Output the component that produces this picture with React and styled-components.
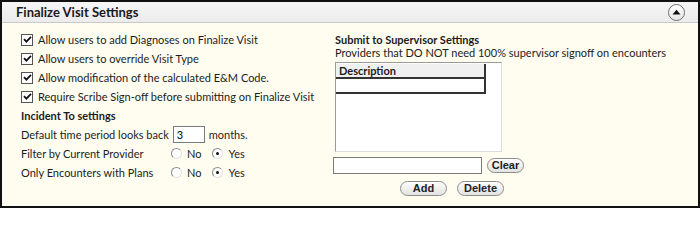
import styled, { createGlobalStyle } from "styled-components";
import { useState } from "react";

const GlobalStyle = createGlobalStyle`
  html, body {
    margin: 0;
    padding: 0;
    background: #ffffff;
  }
  * {
    box-sizing: border-box;
  }
`;

const options = [
  "Allow users to add Diagnoses on Finalize Visit",
  "Allow users to override Visit Type",
  "Allow modification of the calculated E&M Code.",
  "Require Scribe Sign-off before submitting on Finalize Visit",
];

function CheckBox({ checked }) {
  return (
    <Box>
      {checked && (
        <svg width="9" height="9" viewBox="0 0 9 9">
          <path d="M1 4.2 L3.4 6.6 L8 1.8" stroke="#111" strokeWidth="1.8" fill="none" />
        </svg>
      )}
    </Box>
  );
}

function RadioGroup({ value }) {
  return (
    <Radios>
      <RadioItem>
        <Radio $on={value === "no"} />
        <span>No</span>
      </RadioItem>
      <RadioItem>
        <Radio $on={value === "yes"} />
        <span>Yes</span>
      </RadioItem>
    </Radios>
  );
}

export default function App() {
  const [months, setMonths] = useState("3");
  const [search, setSearch] = useState("");

  return (
    <>
      <GlobalStyle />
      <Panel>
        <Header>
          <Title>Finalize Visit Settings</Title>
          <Collapse>
            <svg width="9" height="6" viewBox="0 0 9 6">
              <path d="M0.5 5.5 L4.5 0.8 L8.5 5.5 Z" fill="#111" />
            </svg>
          </Collapse>
        </Header>
        <Body>
          <Column>
            {options.map((o) => (
              <Row key={o}>
                <CheckBox checked />
                <Label>{o}</Label>
              </Row>
            ))}
            <SubHead>Incident To settings</SubHead>
            <Row>
              <Label>Default time period looks back</Label>
              <Months value={months} onChange={(e) => setMonths(e.target.value)} />
              <Label>months.</Label>
            </Row>
            <Row>
              <FieldName>Filter by Current Provider</FieldName>
              <RadioGroup value="yes" />
            </Row>
            <Row>
              <FieldName>Only Encounters with Plans</FieldName>
              <RadioGroup value="yes" />
            </Row>
          </Column>
          <Column>
            <SideTitle>Submit to Supervisor Settings</SideTitle>
            <SideText>Providers that DO NOT need 100% supervisor signoff on encounters</SideText>
            <ListBox>
              <Table>
                <thead>
                  <tr>
                    <Th>Description</Th>
                  </tr>
                </thead>
                <tbody>
                  <tr>
                    <Td />
                  </tr>
                </tbody>
              </Table>
            </ListBox>
            <SearchRow>
              <Search value={search} onChange={(e) => setSearch(e.target.value)} />
              <Pill $w={37}>Clear</Pill>
            </SearchRow>
            <ButtonRow>
              <Pill $w={47}>Add</Pill>
              <Pill $w={47}>Delete</Pill>
            </ButtonRow>
          </Column>
        </Body>
      </Panel>
    </>
  );
}

const Panel = styled.div`
  width: 700px;
  height: 208px;
  border: 2px solid #111;
  background: #fffcf0;
  font-family: "Lato", "Noto Sans", sans-serif;
  font-size: 11px;
  color: #1c1c1c;
  display: flex;
  flex-direction: column;
`;

const Header = styled.div`
  height: 21px;
  flex: none;
  display: flex;
  align-items: center;
  justify-content: space-between;
  padding: 0 13px 0 14px;
  background: linear-gradient(#f6f6f6, #ececec);
  border-bottom: 1px solid #c9c9c9;
`;

const Title = styled.div`
  font-weight: bold;
  font-size: 13px;
  color: #1a1a1a;
`;

const Collapse = styled.div`
  width: 17px;
  height: 17px;
  border-radius: 50%;
  border: 1px solid #6e6e6e;
  background: linear-gradient(#ffffff, #e6e6e6);
  display: flex;
  align-items: center;
  justify-content: center;
  padding-bottom: 1px;
`;

const Body = styled.div`
  flex: 1;
  display: grid;
  grid-template-columns: 314px 1fr;
  padding: 7px 0 0 19px;
`;

const Column = styled.div`
  display: flex;
  flex-direction: column;
`;

const Row = styled.div`
  height: 19px;
  display: flex;
  align-items: center;
  gap: 4px;
`;

const Box = styled.span`
  width: 12px;
  height: 12px;
  flex: none;
  margin-right: 1px;
  border: 1px solid #555;
  background: #fff;
  display: flex;
  align-items: center;
  justify-content: center;
`;

const Label = styled.span`
  white-space: nowrap;
`;

const SubHead = styled.div`
  height: 19px;
  line-height: 19px;
  font-weight: bold;
`;

const Months = styled.input`
  width: 32px;
  height: 17px;
  margin: 0;
  padding: 0 3px;
  border: 1px solid #7a7a7a;
  background: #fff;
  font: inherit;
  outline: none;
`;

const FieldName = styled.span`
  width: 146px;
  white-space: nowrap;
`;

const Radios = styled.div`
  display: flex;
  gap: 11px;
`;

const RadioItem = styled.label`
  display: flex;
  align-items: center;
  gap: 5px;
`;

const Radio = styled.span`
  width: 11px;
  height: 11px;
  border-radius: 50%;
  border: 1px solid;
  border-color: #8a8a8a #e2e2e2 #e2e2e2 #8a8a8a;
  background: #fff;
  display: flex;
  align-items: center;
  justify-content: center;
  &::after {
    content: "";
    width: 3px;
    height: 3px;
    border-radius: 50%;
    background: ${(p) => (p.$on ? "#111" : "transparent")};
  }
`;

const SideTitle = styled.div`
  font-weight: bold;
  line-height: 13px;
  margin-top: 3px;
`;

const SideText = styled.div`
  line-height: 13px;
  white-space: nowrap;
`;

const ListBox = styled.div`
  margin-top: 3px;
  width: 167px;
  height: 90px;
  border: 1px solid;
  border-color: #9a9a9a #dcdcdc #dcdcdc #9a9a9a;
  background: #fff;
  padding: 1px 0 0 0;
`;

const Table = styled.table`
  width: 150px;
  border-collapse: collapse;
  border-right: 2px solid #333;
`;

const Th = styled.th`
  height: 14px;
  padding: 0 3px;
  text-align: left;
  font-weight: bold;
  background: #f0f0f0;
  border-bottom: 2px solid #333;
`;

const Td = styled.td`
  height: 15px;
  border-bottom: 2px solid #333;
`;

const SearchRow = styled.div`
  display: flex;
  align-items: center;
  gap: 5px;
  margin: 5px 0 0 -2px;
`;

const Search = styled.input`
  width: 149px;
  height: 17px;
  border: 1px solid #7a7a7a;
  background: #fff;
  outline: none;
`;

const Pill = styled.button`
  width: ${(p) => p.$w}px;
  height: 15px;
  padding: 0;
  border: 1px solid #8c8c8c;
  border-radius: 8px;
  background: linear-gradient(#fdfdfd, #e2e2e2);
  font-family: "Liberation Sans", Arial, sans-serif;
  font-size: 11px;
  font-weight: bold;
  color: #222;
  line-height: 13px;
`;

const ButtonRow = styled.div`
  display: flex;
  gap: 10px;
  margin: 7px 0 0 65px;
`;
